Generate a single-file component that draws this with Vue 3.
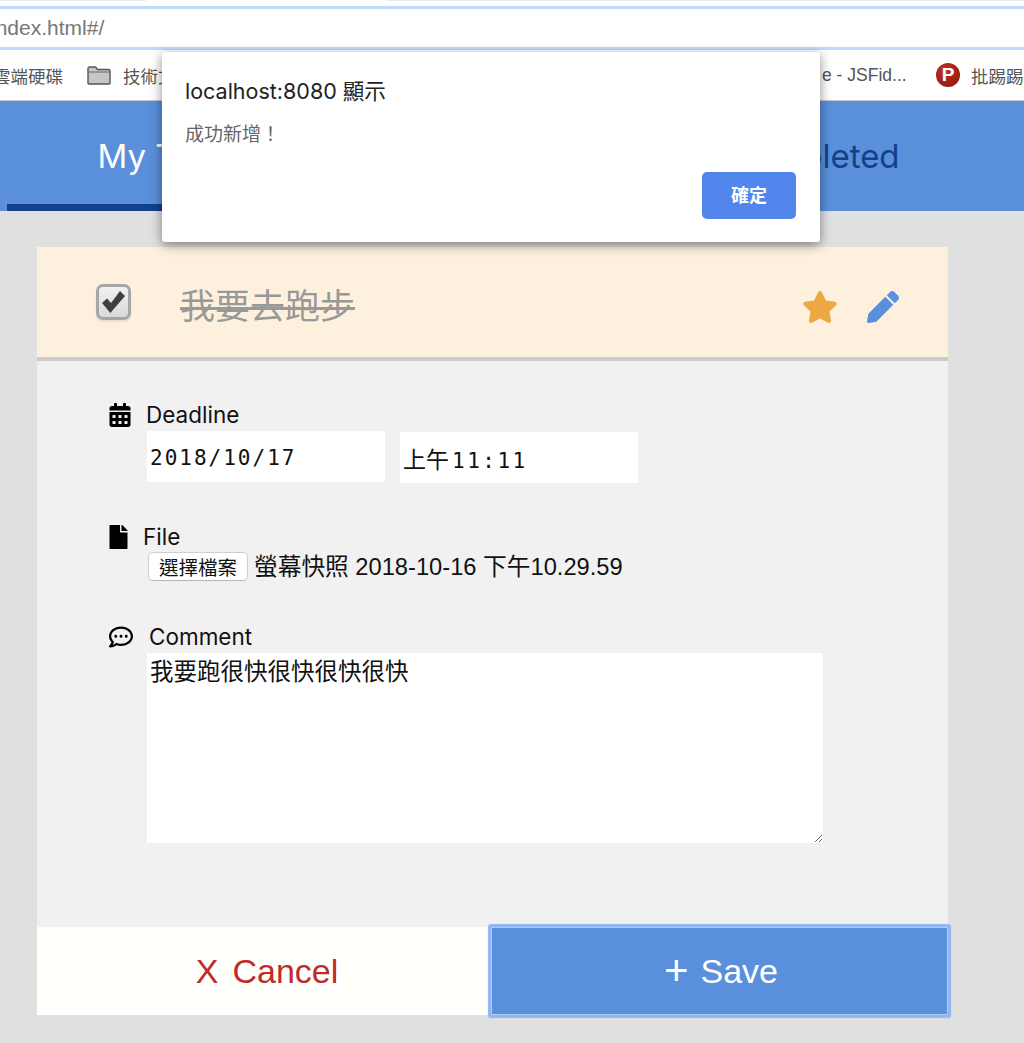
<script setup>
const starPath = 'M259.3 17.8L194 150.2 47.9 171.5c-26.2 3.8-36.7 36.1-17.7 54.6l105.7 103-25 145.5c-4.5 26.3 23.2 46 46.4 33.7L288 439.6l130.7 68.7c23.2 12.2 50.9-7.4 46.4-33.7l-25-145.5 105.7-103c19-18.5 8.5-50.8-17.7-54.6L382 150.2 316.7 17.8c-11.7-23.6-45.6-23.9-57.4 0z'
const pencilPath = 'M497.9 142.1l-46.1 46.1c-4.7 4.7-12.3 4.7-17 0l-111-111c-4.7-4.7-4.7-12.3 0-17l46.1-46.1c18.7-18.7 49.1-18.7 67.9 0l60.1 60.1c18.8 18.7 18.8 49.1 0 67.9zM284.2 99.8L21.6 362.4.4 483.9c-2.9 16.4 11.4 30.6 27.8 27.8l121.5-21.3 262.6-262.6c4.7-4.7 4.7-12.3 0-17l-111-111c-4.8-4.7-12.4-4.7-17.1 0z'
const calendarPath = 'M0 464c0 26.5 21.5 48 48 48h352c26.5 0 48-21.5 48-48V192H0v272zm320-196c0-6.6 5.4-12 12-12h40c6.6 0 12 5.4 12 12v40c0 6.6-5.4 12-12 12h-40c-6.6 0-12-5.4-12-12v-40zm0 128c0-6.6 5.4-12 12-12h40c6.6 0 12 5.4 12 12v40c0 6.6-5.4 12-12 12h-40c-6.6 0-12-5.4-12-12v-40zM192 268c0-6.6 5.4-12 12-12h40c6.6 0 12 5.4 12 12v40c0 6.6-5.4 12-12 12h-40c-6.6 0-12-5.4-12-12v-40zm0 128c0-6.6 5.4-12 12-12h40c6.6 0 12 5.4 12 12v40c0 6.6-5.4 12-12 12h-40c-6.6 0-12-5.4-12-12v-40zM64 268c0-6.6 5.4-12 12-12h40c6.6 0 12 5.4 12 12v40c0 6.6-5.4 12-12 12H76c-6.6 0-12-5.4-12-12v-40zm0 128c0-6.6 5.4-12 12-12h40c6.6 0 12 5.4 12 12v40c0 6.6-5.4 12-12 12H76c-6.6 0-12-5.4-12-12v-40zM400 64h-48V16c0-8.8-7.2-16-16-16h-32c-8.8 0-16 7.2-16 16v48H160V16c0-8.8-7.2-16-16-16h-32c-8.8 0-16 7.2-16 16v48H48C21.5 64 0 85.5 0 112v48h448v-48c0-26.5-21.5-48-48-48z'
const filePath = 'M224 136V0H24C10.7 0 0 10.7 0 24v464c0 13.3 10.7 24 24 24h336c13.3 0 24-10.7 24-24V160H248c-13.2 0-24-10.8-24-24zm160-14.1v6.1H256V0h6.1c6.4 0 12.5 2.5 17 7l97.9 98c4.5 4.5 7 10.6 7 16.9z'
const commentPath = 'M144 208c-17.7 0-32 14.3-32 32s14.3 32 32 32 32-14.3 32-32-14.3-32-32-32zm112 0c-17.7 0-32 14.3-32 32s14.3 32 32 32 32-14.3 32-32-14.3-32-32-32zm112 0c-17.7 0-32 14.3-32 32s14.3 32 32 32 32-14.3 32-32-14.3-32-32-32zM256 32C114.6 32 0 125.1 0 240c0 47.6 19.9 91.2 52.9 126.3C38 405.7 7 439.1 6.5 439.5c-6.6 7-8.4 17.2-4.6 26S14.4 480 24 480c61.5 0 110-25.7 139.1-46.3C192 442.8 223.2 448 256 448c141.4 0 256-93.1 256-208S397.4 32 256 32zm0 368c-26.7 0-53.1-4.1-78.4-12.1l-22.7-7.2-19.5 13.8c-14.3 10.1-33.9 21.4-57.5 29 7.3-12.1 14.4-25.7 19.9-40.2l10.6-28.1-20.6-21.8C69.7 314.1 48 282.2 48 240c0-88.2 93.3-160 208-160s208 71.8 208 160-93.3 160-208 160z'
</script>

<template>
  <div class="page">
    <div class="tabstrip"><span class="strip-a"></span><span class="strip-b"></span></div>
    <div class="urlbar"><span class="url">index.html#/</span></div>
    <div class="bookmarks">
      <span class="bm bm-first">雲端硬碟</span>
      <svg class="folder" viewBox="0 0 24 19"><path d="M1 17V2.500C1 1.700 1.700 1 2.500 1h6l2 2.500h11c.8 0 1.500.7 1.500 1.500v12c0 .6-.4 1-1 1H2c-.6 0-1-.4-1-1z" fill="#c6c6c6" stroke="#555" stroke-width="1.400"/><path d="M1.500 6h21" stroke="#666" fill="none"/></svg>
      <span class="bm bm-tech">技術文章</span>
      <span class="bm bm-fiddle">e - JSFid...</span>
      <span class="pt-icon">P</span>
      <span class="bm bm-ptt">批踢踢實業坊</span>
    </div>

    <nav class="tabs">
      <div class="tab active">My Tasks</div>
      <div class="tab">In Progress</div>
      <div class="tab">Completed</div>
    </nav>

    <main class="main">
      <section class="card">
        <header class="task">
          <span class="check">
            <svg viewBox="0 0 23 22" class="tick"><path d="M0 12 5 7.600 9 12 18 0l5 5L8.300 22z" fill="#3f3f3f"/></svg>
          </span>
          <span class="title">我要去跑步</span>
          <svg class="star" viewBox="0 0 576 512"><path :d="starPath"/></svg>
          <svg class="pencil" viewBox="0 0 512 512"><path :d="pencilPath"/></svg>
        </header>

        <div class="body">
          <div class="field field-deadline">
            <div class="label">
              <svg class="ico ico-cal" viewBox="0 0 448 512"><path :d="calendarPath"/></svg>
              <span>Deadline</span>
            </div>
            <div class="dates">
              <div class="input">2018/10/17</div>
              <div class="input input-time"><span class="cjk">上午</span>11:11</div>
            </div>
          </div>

          <div class="field field-file">
            <div class="label">
              <svg class="ico ico-file" viewBox="0 0 384 512"><path :d="filePath"/></svg>
              <span>File</span>
            </div>
            <div class="file-row">
              <button class="file-btn" type="button">選擇檔案</button>
              <span class="file-name">螢幕快照 2018-10-16 下午10.29.59</span>
            </div>
          </div>

          <div class="field field-comment">
            <div class="label">
              <svg class="ico ico-com" viewBox="0 0 512 512"><path :d="commentPath"/></svg>
              <span>Comment</span>
            </div>
            <textarea class="area" readonly>我要跑很快很快很快很快</textarea>
          </div>
        </div>

        <footer class="actions">
          <button class="act cancel" type="button"><span class="sym">X</span>Cancel</button>
          <button class="act save" type="button"><span class="sym plus">+</span>Save</button>
        </footer>
      </section>
    </main>

    <div class="dialog">
      <div class="d-title">localhost:8080 顯示</div>
      <div class="d-msg">成功新增！</div>
      <div class="d-foot"><button class="d-ok" type="button">確定</button></div>
    </div>
  </div>
</template>

<style>
html, body { margin: 0; background: #e0e0e0; }
</style>

<style scoped>
.page {
  position: relative;
  width: 1024px;
  height: 1043px;
  overflow: hidden;
  background: #e0e0e0;
  font-family: "Liberation Sans", "Noto Sans CJK TC", sans-serif;
  color: #111;
}
.tabstrip { height: 6px; background: #fff; position: relative; display: flex; justify-content: space-between; }
.strip-a, .strip-b { display: block; height: 1px; background: #e8ebef; }
.strip-a { width: 146px; }
.strip-b { width: 638px; }
.urlbar {
  height: 44px;
  box-sizing: border-box;
  border-top: 3px solid #c0d8fc;
  border-bottom: 3px solid #c0d8fc;
  background: #fff;
  display: flex;
  align-items: center;
  overflow: hidden;
}
.url { font-size: 21px; color: #777; margin-left: -9px; white-space: nowrap; }
.bookmarks {
  height: 51px;
  box-sizing: border-box;
  background: #fff;
  border-bottom: 1px solid #c9c9c9;
  display: flex;
  align-items: center;
  overflow: hidden;
  color: #555;
  font-size: 17.500px;
  white-space: nowrap;
}
.bm-first { margin-left: -7px; width: 94px; flex: none; }
.folder { width: 24px; height: 19px; flex: none; }
.bm-tech { margin-left: 12px; width: 100px; flex: none; }
.bm-fiddle { margin-left: 599px; width: 114px; flex: none; font-size: 17.500px; }
.pt-icon {
  width: 24px;
  height: 24px;
  border-radius: 50%;
  background: radial-gradient(circle at 40% 30%, #c03226, #8a1206);
  color: #fff;
  font-weight: 700;
  font-size: 19px;
  line-height: 24px;
  text-align: center;
  flex: none;
}
.bm-ptt { margin-left: 11px; flex: none; }

.tabs { height: 110px; background: #5a8fdb; display: flex; padding-left: 7px; box-sizing: border-box; }
.tab {
  flex: none;
  width: 323px;
  height: 110px;
  box-sizing: border-box;
  padding-top: 33px;
  text-align: center;
  font-family: Inter, sans-serif;
  font-size: 33px;
  line-height: 44px;
  color: #12418a;
}
.tab.active { color: #fff; border-bottom: 7px solid #12418a; padding-left: 6px; }

.main { padding: 36px 76px 0 37px; }
.card { width: 911px; }
.task {
  height: 110px;
  background: #fdf1dd;
  border-bottom: 4px solid #cbcbcb;
  display: flex;
  align-items: center;
  padding-left: 59px;
}
.check {
  width: 35px;
  height: 36px;
  box-sizing: border-box;
  border: 3px solid #a6a6a6;
  border-radius: 7px;
  background: linear-gradient(#f1f1f1, #d9d9d9);
  box-shadow: 0 2px 2px rgba(0, 0, 0, .08);
  display: flex;
  align-items: center;
  justify-content: center;
  flex: none;
}
.tick { width: 23px; height: 22px; }
.title {
  margin-left: 49px;
  font-size: 35px;
  line-height: 46px;
  color: #999;
  text-decoration: line-through;
  text-decoration-thickness: 3px;
  flex: 1;
  margin-top: 9px;
}
.star { width: 36px; height: 32px; fill: #eca843; flex: none; margin-right: 29px; margin-top: 10px; }
.pencil { width: 32px; height: 32px; fill: #5a8fdb; flex: none; margin-right: 49px; margin-top: 10px; }

.body { background: #f1f1f1; height: 566px; box-sizing: border-box; padding: 40px 0 0 72px; }
.label { display: flex; align-items: center; font-family: Inter, sans-serif; font-size: 22.500px; line-height: 28px; color: #111; }
.ico { fill: #000; flex: none; display: block; }
.ico-cal { width: 22px; height: 24px; margin-right: 15px; }
.ico-file { width: 19px; height: 24px; margin-right: 15px; }
.ico-com { width: 24px; height: 24px; margin-right: 16px; }

.dates { display: flex; gap: 15px; margin: 2px 0 0 38px; }
.input {
  width: 238px;
  height: 51px;
  background: #fff;
  box-sizing: border-box;
  padding-left: 3px;
  font-family: "DejaVu Sans Mono", monospace;
  font-size: 21px;
  letter-spacing: 2px;
  line-height: 55px;
  color: #111;
}
.input-time { margin-top: 1px; line-height: 53px; letter-spacing: 2.500px; }
.cjk { font-family: "Noto Sans CJK TC", sans-serif; font-size: 23px; letter-spacing: 0; margin-right: 3px; }

.field-file { margin-top: 40px; }
.file-row { display: flex; align-items: center; margin: 0 0 0 39px; height: 30px; }
.file-btn {
  width: 100px;
  height: 29px;
  margin-top: 1px;
  padding: 0;
  background: #fff;
  border: 1px solid #cfcfcf;
  border-bottom-color: #b5b5b5;
  border-radius: 5px;
  font-family: "Noto Sans CJK TC", sans-serif;
  font-size: 19.500px;
  line-height: 26px;
  color: #111;
}
.file-name { margin-left: 6px; margin-top: -2px; font-size: 23.700px; color: #111; white-space: nowrap; }

.field-comment { margin-top: 42px; }
.area {
  display: block;
  margin: 2px 0 0 38px;
  width: 676px;
  height: 190px;
  box-sizing: border-box;
  border: 0;
  outline: 0;
  padding: 2px 3px;
  background: #fff;
  font-family: "Noto Sans CJK TC", sans-serif;
  font-size: 23.500px;
  line-height: 30px;
  color: #111;
  resize: both;
}

.actions { display: flex; height: 88px; }
.act {
  border: 0;
  padding: 0;
  font-family: "Liberation Sans", sans-serif;
  font-size: 34px;
  display: flex;
  align-items: center;
  justify-content: center;
}
.sym { margin-right: 14px; }
.plus { font-size: 42px; line-height: 1; margin-right: 12px; margin-top: -1px; }
.cancel { width: 454px; padding-left: 6px; background: #fffffc; color: #c02b2b; }
.save {
  width: 457px;
  padding-left: 3px;
  background: #5a8fdb;
  color: #fff;
  border: 1px solid #b4cff5;
  box-sizing: border-box;
  box-shadow: 0 0 1px 3px #8db6f0;
  border-radius: 1px;
}

.dialog {
  position: absolute;
  left: 162px;
  top: 52px;
  width: 658px;
  height: 190px;
  box-sizing: border-box;
  padding: 25px 24px 0 23px;
  background: #fff;
  border-radius: 3px;
  box-shadow: 0 3px 12px rgba(0, 0, 0, .45);
  display: flex;
  flex-direction: column;
}
.d-title { font-family: Inter, "Noto Sans CJK TC", sans-serif; font-size: 21.500px; line-height: 28px; color: #222; }
.d-msg { margin-top: 17px; font-size: 19px; line-height: 26px; color: #666; }
.d-foot { margin-top: 24px; display: flex; justify-content: flex-end; }
.d-ok {
  width: 94px;
  height: 47px;
  padding: 0 0 4px;
  background: #5286ec;
  color: #fff;
  border: 0;
  border-radius: 5px;
  font-family: "Noto Sans CJK TC", sans-serif;
  font-weight: 700;
  font-size: 18px;
}
</style>
